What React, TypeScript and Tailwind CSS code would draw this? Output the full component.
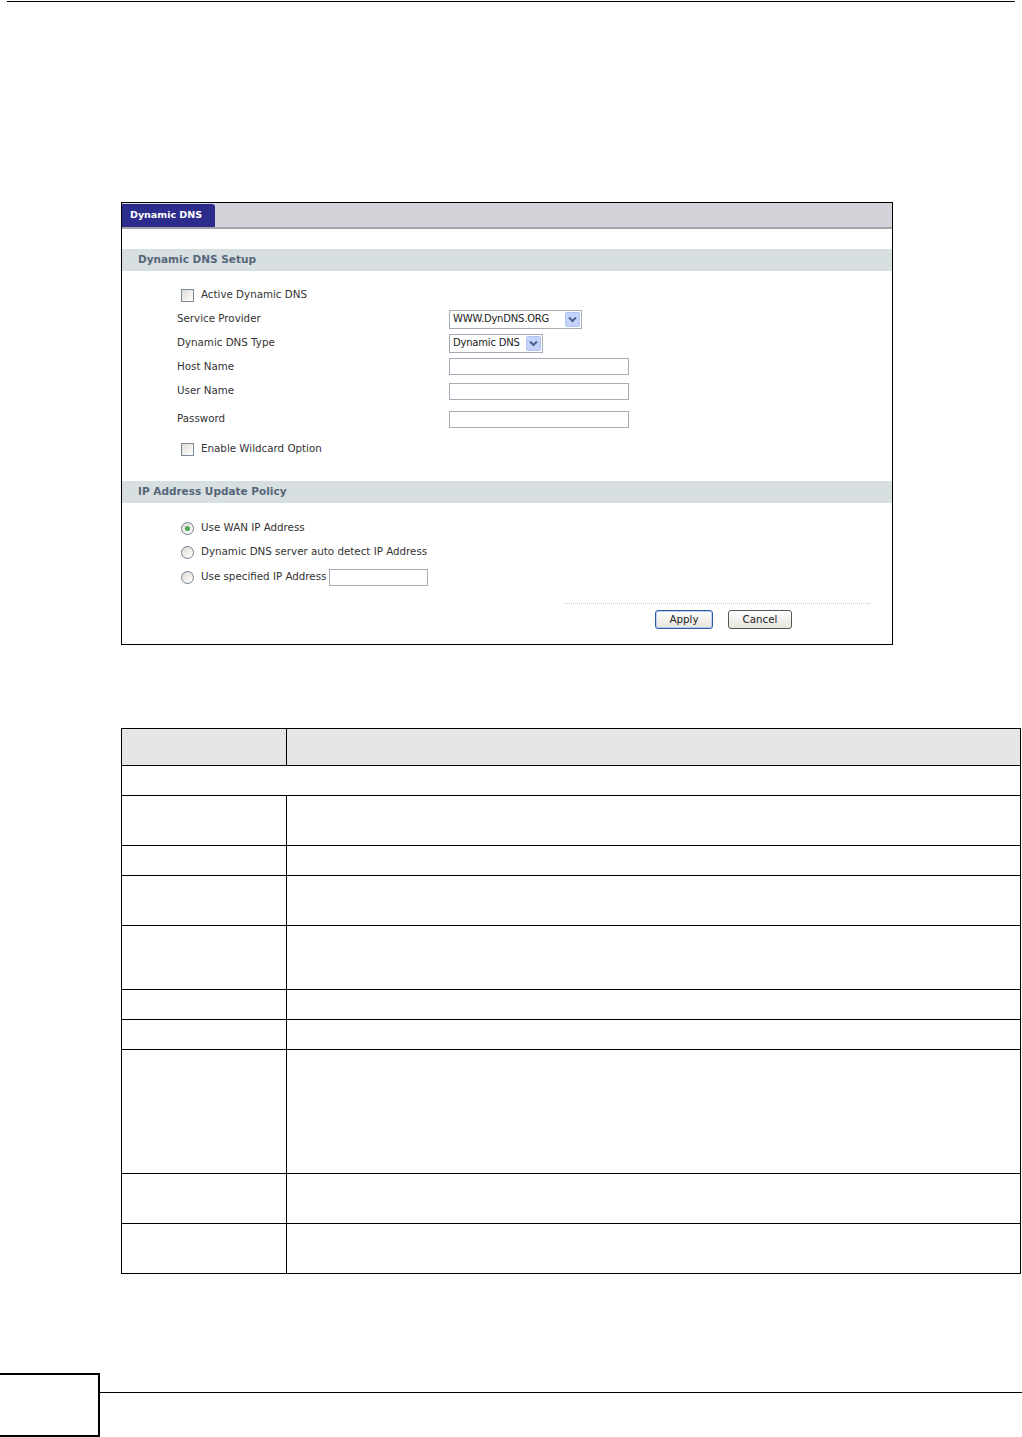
import React from "react";

const ui = { fontFamily: '"DejaVu Sans", Verdana, sans-serif' };

function Checkbox() {
  return (
    <span className="inline-block shrink-0 w-[13px] h-[13px] border border-[#7a8a99] bg-gradient-to-br from-[#dcdcd6] to-[#ffffff] mr-[7px]" />
  );
}

function Radio({ checked }: { checked?: boolean }) {
  return (
    <span className="inline-flex shrink-0 items-center justify-center w-[13px] h-[13px] rounded-full border border-[#6f7f90] bg-gradient-to-br from-[#dcdcd6] to-[#ffffff] mr-[7px]">
      {checked && <span className="w-[5px] h-[5px] rounded-full bg-[#4aa94a]" />}
    </span>
  );
}

function Select({ value, width }: { value: string; width: string }) {
  return (
    <div className={`flex items-center h-[19px] border border-[#a5acb5] bg-white ${width}`}>
      <span className="flex-1 pl-[3px] text-[10px] tracking-[-0.2px] text-[#222] leading-none whitespace-nowrap">{value}</span>
      <span className="shrink-0 w-[15px] h-[15px] mr-[1px] ml-[2px] bg-[#c3d3fd] border border-[#b0c4f0] rounded-[2px] flex items-center justify-center">
        <svg width="9" height="7" viewBox="0 0 9 7">
          <path d="M1 1.5 L4.5 5 L8 1.5" stroke="#4d6185" strokeWidth="2" fill="none" />
        </svg>
      </span>
    </div>
  );
}

function TextBox({ width }: { width: string }) {
  return <div className={`shrink-0 h-[17px] border border-[#a5acb5] bg-white ${width}`} />;
}

function SectionHeader({ title }: { title: string }) {
  return (
    <div className="h-[22px] bg-[#d8dfe0] flex items-center pl-[16px]">
      <span className="text-[10.5px] font-bold text-[#56667a]">{title}</span>
    </div>
  );
}

function FieldRow({ label, h, children }: { label: string; h: string; children?: React.ReactNode }) {
  return (
    <div className={`flex items-center ${h}`}>
      <span className="shrink-0 w-[327px] pl-[55px] text-[10.3px] text-[#333]">{label}</span>
      {children}
    </div>
  );
}

function CheckRow({ label, h }: { label: string; h: string }) {
  return (
    <div className={`flex items-center ${h} pl-[59px]`}>
      <Checkbox />
      <span className="text-[10.3px] text-[#333]">{label}</span>
    </div>
  );
}

function Button({ label, primary }: { label: string; primary?: boolean }) {
  return (
    <div
      className={`h-[19px] flex items-center justify-center rounded-[3px] bg-gradient-to-b from-[#ffffff] to-[#e6e4dc] text-[10.3px] text-[#222] border ${
        primary ? "w-[58px] border-[#2f5aa8] shadow-[inset_0_0_0_1px_#b8cff5]" : "w-[64px] border-[#555]"
      }`}
    >
      {label}
    </div>
  );
}

function Screenshot() {
  return (
    <div className="ml-[121px] w-[772px] h-[443px] border border-black bg-white" style={ui}>
      <div className="h-[26px] bg-[#d5d3d9] border-b-2 border-[#a3a3aa] flex items-end">
        <div className="w-[93px] h-[23px] bg-[#2b2c8c] rounded-tr-[3px] flex items-center pl-[8px]">
          <span className="text-[9.5px] font-bold text-white">Dynamic DNS</span>
        </div>
      </div>
      <div className="h-[20px]" />
      <SectionHeader title="Dynamic DNS Setup" />
      <div className="h-[12px]" />
      <CheckRow label="Active Dynamic DNS" h="h-[24px]" />
      <FieldRow label="Service Provider" h="h-[24px]">
        <Select value="WWW.DynDNS.ORG" width="w-[133px]" />
      </FieldRow>
      <FieldRow label="Dynamic DNS Type" h="h-[24px]">
        <Select value="Dynamic DNS" width="w-[94px]" />
      </FieldRow>
      <FieldRow label="Host Name" h="h-[23px]">
        <TextBox width="w-[180px]" />
      </FieldRow>
      <FieldRow label="User Name" h="h-[26px]">
        <TextBox width="w-[180px]" />
      </FieldRow>
      <FieldRow label="Password" h="h-[30px]">
        <TextBox width="w-[180px]" />
      </FieldRow>
      <CheckRow label="Enable Wildcard Option" h="h-[30px]" />
      <div className="h-[17px]" />
      <SectionHeader title="IP Address Update Policy" />
      <div className="h-[13px]" />
      <div className="flex items-center h-[24px] pl-[59px]">
        <Radio checked />
        <span className="text-[10.3px] text-[#333]">Use WAN IP Address</span>
      </div>
      <div className="flex items-center h-[24px] pl-[59px]">
        <Radio />
        <span className="text-[10.3px] text-[#333]">Dynamic DNS server auto detect IP Address</span>
      </div>
      <div className="flex items-center h-[26px] pl-[59px]">
        <Radio />
        <span className="text-[10.3px] text-[#333] mr-[3px]">Use specified IP Address</span>
        <TextBox width="w-[99px]" />
      </div>
      <div className="h-[13px]" />
      <div className="ml-[443px] mr-[22px] border-t border-dotted border-[#c8c8c8]" />
      <div className="h-[6px]" />
      <div className="flex justify-end gap-[15px] pr-[100px]">
        <Button label="Apply" primary />
        <Button label="Cancel" />
      </div>
    </div>
  );
}

const rows: { h: string; span?: boolean }[] = [
  { h: "h-[30px]", span: true },
  { h: "h-[50px]" },
  { h: "h-[30px]" },
  { h: "h-[50px]" },
  { h: "h-[64px]" },
  { h: "h-[30px]" },
  { h: "h-[30px]" },
  { h: "h-[124px]" },
  { h: "h-[50px]" },
  { h: "h-[50px]" },
];

function FieldTable() {
  return (
    <table className="ml-[121px] w-[900px] border-collapse border-[1.5px] border-black table-fixed">
      <colgroup>
        <col className="w-[165px]" />
        <col />
      </colgroup>
      <thead>
        <tr className="h-[37px] bg-[#e6e6e6]">
          <th className="border-[1.5px] border-black" />
          <th className="border-[1.5px] border-black" />
        </tr>
      </thead>
      <tbody>
        {rows.map((r, i) =>
          r.span ? (
            <tr key={i} className={r.h}>
              <td colSpan={2} className="border-[1.5px] border-black" />
            </tr>
          ) : (
            <tr key={i} className={r.h}>
              <td className="border-[1.5px] border-black" />
              <td className="border-[1.5px] border-black" />
            </tr>
          )
        )}
      </tbody>
    </table>
  );
}

export default function App() {
  return (
    <div className="relative w-[1022px] h-[1437px] bg-white overflow-hidden">
      <div className="pt-[1px]">
        <div className="ml-[7px] w-[1008px] border-t-[1.5px] border-black" />
      </div>
      <div className="h-[200px]" />
      <Screenshot />
      <div className="h-[83px]" />
      <FieldTable />
      <div className="h-[99px]" />
      <div className="flex items-start">
        <div className="w-[100px] h-[64px] border-2 border-black border-l-0" />
        <div className="flex-1 mt-[19px] border-t-[1.5px] border-black" />
      </div>
    </div>
  );
}
